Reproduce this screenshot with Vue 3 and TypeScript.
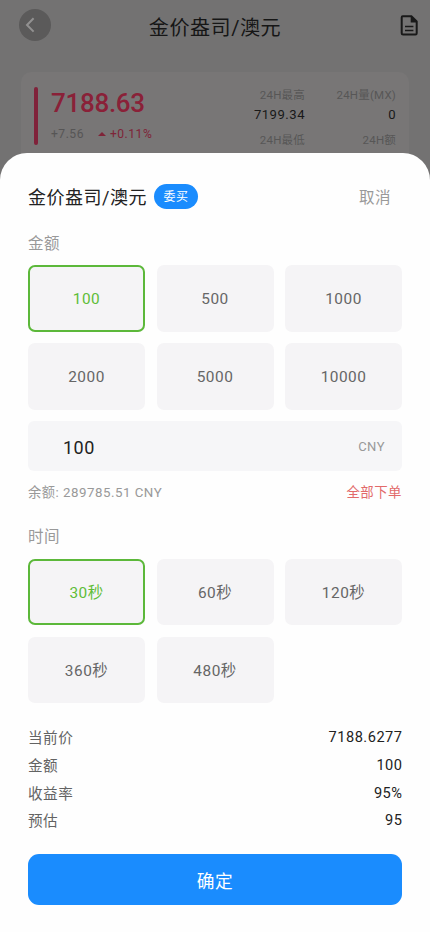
<script setup lang="ts">
import { ref, computed } from 'vue'

const amounts: number[] = [100, 500, 1000, 2000, 5000, 10000]
const durations: number[] = [30, 60, 120, 360, 480]
const amount = ref<number>(100)
const duration = ref<number>(30)
const rate = 95

const summary = computed(() => [
  { label: '当前价', value: '7188.6277' },
  { label: '金额', value: String(amount.value) },
  { label: '收益率', value: `${rate}%` },
  { label: '预估', value: String((amount.value * rate) / 100) },
])
</script>

<template>
  <div class="screen">
    <header class="topbar">
      <button class="back" aria-label="返回">
        <svg width="32" height="32" viewBox="0 0 32 32" fill="none">
          <path d="M14.6 9.2 8 16l6.6 6.6" stroke="#929191" stroke-width="2" />
        </svg>
      </button>
      <h1 class="heading">金价盎司/澳元</h1>
      <svg class="doc" width="18" height="21" viewBox="0 0 18 21" fill="none">
        <path d="M2.7 1.2H11.4L16.7 6.5V18.2Q16.7 19.6 15.5 19.6H3.1Q1.7 19.6 1.7 18.2V2.5Q1.7 1.2 2.7 1.2Z" stroke="#191919" stroke-width="2" />
        <path d="M10.7 1V7.5H17.2Z" fill="#191919" />
        <path d="M5 11.5h8.4M5 15.5h8.4" stroke="#191919" stroke-width="1.6" />
      </svg>
    </header>

    <section class="quote">
      <div class="bar"></div>
      <div class="price">
        <div class="last">7188.63</div>
        <div class="change">
          <span class="diff">+7.56</span>
          <svg width="8" height="4" viewBox="0 0 8 4"><path d="M0 4 4 0 8 4Z" fill="#7f2438" /></svg>
          <span class="pct">+0.11%</span>
        </div>
      </div>
      <dl class="stats">
        <dt>24H最高</dt>
        <dt>24H量(MX)</dt>
        <dd>7199.34</dd>
        <dd>0</dd>
        <dt>24H最低</dt>
        <dt>24H额</dt>
      </dl>
    </section>

    <main class="sheet">
      <div class="sheet-head">
        <h2>金价盎司/澳元</h2>
        <span class="pill">委买</span>
        <button class="cancel">取消</button>
      </div>

      <div class="label">金额</div>
      <div class="grid">
        <button
          v-for="a in amounts"
          :key="a"
          class="option"
          :class="{ active: a === amount }"
          @click="amount = a"
        >{{ a }}</button>
      </div>

      <div class="field">
        <span class="entered">{{ amount }}</span>
        <span class="unit">CNY</span>
      </div>
      <div class="balance">
        <span>余额: 289785.51 CNY</span>
        <button class="all">全部下单</button>
      </div>

      <div class="label time-label">时间</div>
      <div class="grid times">
        <button
          v-for="d in durations"
          :key="d"
          class="option"
          :class="{ active: d === duration }"
          @click="duration = d"
        >{{ d }}秒</button>
      </div>

      <div class="summary">
        <div v-for="row in summary" :key="row.label" class="row">
          <span class="name">{{ row.label }}</span>
          <span class="value">{{ row.value }}</span>
        </div>
      </div>

      <button class="confirm">确定</button>
    </main>
  </div>
</template>

<style>
body {
  background: #737272;
}
</style>

<style scoped>
.screen {
  height: 932px;
  display: flex;
  flex-direction: column;
  overflow: hidden;
  background: #737272;
  font-family: Roboto, 'Noto Sans CJK SC', sans-serif;
  font-weight: 400;
  letter-spacing: 0.5px;
}
button {
  font: inherit;
  letter-spacing: inherit;
  border: 0;
  padding: 0;
  background: none;
}
h1,
h2,
dl,
dd {
  margin: 0;
  font-weight: inherit;
}
.topbar {
  flex: none;
  height: 72px;
  box-sizing: border-box;
  padding: 9px 12px 0 19px;
  display: grid;
  grid-template-columns: 43px 1fr 50px;
  align-items: start;
}
.back {
  width: 32px;
  height: 32px;
  border-radius: 50%;
  background: #5b5a5a;
}
.back svg {
  display: block;
}
.heading {
  text-align: center;
  font-size: 20.1px;
  line-height: 38px;
  color: #161616;
}
.doc {
  justify-self: end;
  margin-top: 6px;
}
.quote {
  flex: none;
  height: 81px;
  box-sizing: border-box;
  margin: 0 21px;
  padding: 15px 13px 0;
  display: flex;
  border-radius: 10px 10px 0 0;
  background: #787676;
}
.bar {
  flex: none;
  width: 4px;
  height: 58px;
  border-radius: 2px;
  background: #80223a;
}
.price {
  margin-left: 13px;
}
.last {
  font-size: 26px;
  font-weight: 500;
  line-height: 33px;
  letter-spacing: -0.3px;
  color: #8a2138;
}
.change {
  display: flex;
  align-items: center;
  margin-top: 5px;
  font-size: 12.1px;
  line-height: 18px;
}
.diff {
  margin-right: 14px;
  color: #565555;
}
.pct {
  margin-left: 4px;
  color: #7f2438;
}
.stats {
  margin-left: auto;
  display: grid;
  grid-template-columns: auto 91px;
  grid-template-rows: 13px 28px 22px;
  align-items: center;
  text-align: right;
  font-size: 11.5px;
  letter-spacing: 0.2px;
  color: #575656;
}
.stats dd {
  font-size: 13.1px;
  letter-spacing: 0.5px;
  color: #191919;
}
.sheet {
  flex: 1;
  box-sizing: border-box;
  padding: 29px 28px 0;
  border-radius: 27px 27px 0 0;
  background: #fefefe;
}
.sheet-head {
  display: flex;
  align-items: center;
  height: 29px;
}
.sheet-head h2 {
  padding-top: 2px;
  font-size: 18px;
  line-height: 27px;
  color: #222;
}
.pill {
  width: 44px;
  height: 25px;
  margin-left: 7px;
  border-radius: 13px;
  background: #1a8cfe;
  color: #fff;
  font-size: 12px;
  line-height: 27px;
  text-align: center;
}
.cancel {
  margin-left: auto;
  margin-right: 11px;
  padding-top: 3px;
  font-size: 15.5px;
  line-height: 27px;
  color: #999;
}
.label {
  height: 24px;
  margin-top: 20px;
  font-size: 15.5px;
  line-height: 26px;
  color: #999;
}
.grid {
  display: grid;
  grid-template-columns: repeat(3, 1fr);
  grid-auto-rows: 66.5px;
  gap: 11.5px;
  margin-top: 10px;
}
.option {
  padding-top: 2px;
  border-radius: 7px;
  background: #f5f4f6;
  font-size: 15.4px;
  color: #666;
}
.option.active {
  border: 2px solid #5cb83a;
  color: #5fbd38;
}
.times .option {
  padding-top: 0;
  padding-bottom: 1px;
}
.field {
  display: flex;
  align-items: center;
  justify-content: space-between;
  height: 50px;
  box-sizing: border-box;
  margin-top: 11.5px;
  padding: 0 17px 0 35px;
  border-radius: 6px;
  background: #f6f6f8;
}
.entered {
  font-size: 18px;
  line-height: 54px;
  padding-top: 3px;
  color: #222;
}
.unit {
  font-size: 13px;
  color: #999;
}
.balance {
  display: flex;
  align-items: center;
  justify-content: space-between;
  height: 22px;
  margin-top: 9px;
  font-size: 13.3px;
  color: #999;
}
.all {
  font-size: 13.4px;
  color: #e26a6a;
}
.time-label {
  margin-top: 22.5px;
  line-height: 25px;
}
.summary {
  margin-top: 21px;
}
.row {
  display: flex;
  justify-content: space-between;
  height: 27.8px;
  line-height: 28.8px;
  font-size: 14.6px;
}
.name {
  color: #636363;
}
.value {
  color: #222;
  margin-right: -0.5px;
  line-height: 27.8px;
}
.confirm {
  display: block;
  width: 100%;
  height: 51px;
  margin-top: 18.5px;
  padding-top: 1px;
  border-radius: 11px;
  background: #1a8cfe;
  color: #fff;
  font-size: 17.7px;
}
</style>
